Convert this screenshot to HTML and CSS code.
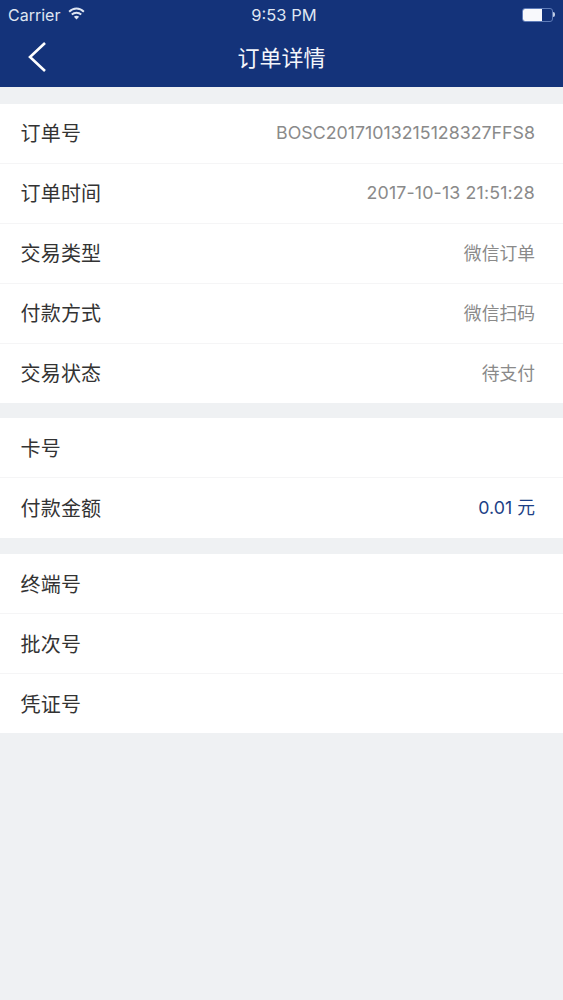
FILE: index.html
```html
<!DOCTYPE html>
<html lang="zh-CN">
<head>
<meta charset="utf-8">
<title>订单详情</title>
<link rel="stylesheet" href="styles.css">
</head>
<body>
<header class="header">
  <div class="status">
    <div class="status-left">
      <span>Carrier</span>
      <svg class="wifi" width="17" height="13" viewBox="0 0 18 13" preserveAspectRatio="none"><path d="M1.2 4.8C5.6.4 12.4.4 16.8 4.8" fill="none" stroke="#dfe6f2" stroke-width="2"/><path d="M4 7.6c2.8-2.6 7.2-2.6 10 0" fill="none" stroke="#dfe6f2" stroke-width="2"/><path d="M9 12.6L6.2 9.7c1.6-1.2 4-1.2 5.6 0z" fill="#dfe6f2"/></svg>
    </div>
    <div class="status-time">9:53 PM</div>
    <div class="status-right">
      <div class="battery"><div class="battery-fill"></div></div>
      <div class="battery-cap"></div>
    </div>
  </div>
  <div class="nav">
    <svg class="back" width="22" height="32" viewBox="0 0 22 32"><path d="M18 2 L3 16 L18 30" fill="none" stroke="#fff" stroke-width="2.6"/></svg>
    <h1 class="title">订单详情</h1>
  </div>
</header>
<main class="content">
  <section class="group">
    <div class="row"><span class="label">订单号</span><span class="value">BOSC20171013215128327FFS8</span></div>
    <div class="row"><span class="label">订单时间</span><span class="value date">2017-10-13 21:51:28</span></div>
    <div class="row"><span class="label">交易类型</span><span class="value">微信订单</span></div>
    <div class="row"><span class="label">付款方式</span><span class="value">微信扫码</span></div>
    <div class="row"><span class="label">交易状态</span><span class="value">待支付</span></div>
  </section>
  <section class="group group-card">
    <div class="row"><span class="label">卡号</span></div>
    <div class="row"><span class="label">付款金额</span><span class="value amount">0.01 元</span></div>
  </section>
  <section class="group">
    <div class="row"><span class="label">终端号</span></div>
    <div class="row"><span class="label">批次号</span></div>
    <div class="row"><span class="label">凭证号</span></div>
  </section>
</main>
</body>
</html>
```
FILE: styles.css
```css
* { box-sizing: border-box; }
html, body { margin: 0; padding: 0; }
body {
  width: 563px;
  height: 1000px;
  overflow: hidden;
  background: #eff1f3;
  font-family: "Inter", "Liberation Sans", "Noto Sans CJK SC", sans-serif;
}
.header {
  height: 87px;
  background: #14337a;
  color: #fff;
}
.status {
  height: 29px;
  padding: 0 8px;
  display: grid;
  grid-template-columns: 1fr auto 1fr;
  align-items: center;
  font-size: 16px;
  color: #dfe6f2;
}
.status-left { display: flex; align-items: center; gap: 8px; }
.wifi { margin-top: -3px; }
.status-time { font-size: 16.5px; margin-left: 5px; }
.status-right { display: flex; justify-content: flex-end; align-items: center; }
.battery {
  width: 31px;
  height: 14px;
  border: 1px solid #5f7cb8;
  border-radius: 3px;
}
.battery-fill { width: 19px; height: 12px; background: #f8f9fc; border-radius: 2px 0 0 2px; }
.battery-cap { width: 2px; height: 5px; background: #c3cfe4; border-radius: 0 2px 2px 0; }
.nav {
  height: 58px;
  position: relative;
  display: flex;
  align-items: center;
  justify-content: center;
}
.back { position: absolute; left: 27px; top: 12px; }
.title {
  margin: -5px 0 0;
  font-family: "Noto Sans CJK SC", sans-serif;
  font-size: 22px;
  font-weight: 400;
  color: #f4f6fb;
}
.content { padding-top: 17px; display: flex; flex-direction: column; }
.group { background: #fff; margin-bottom: 15px; }
.group-card { margin-bottom: 16px; min-height: 120px; }
.row {
  height: 60px;
  padding: 0 28px 0 20.5px;
  display: flex;
  align-items: center;
  justify-content: space-between;
  border-top: 1px solid #f5f5f6;
}
.row:first-child { border-top: 0; height: 59px; }
.label {
  font-family: "Noto Sans CJK SC", sans-serif;
  font-size: 20px;
  letter-spacing: 0.2px;
  color: #333;
  margin-top: -2px;
}
.group:not(:first-child) .label { margin-top: 0; }
.value {
  font-family: "Inter", "Noto Sans CJK SC", sans-serif;
  font-size: 17.8px;
  color: #8a8a8a;
  margin-top: -3px;
}
.date { letter-spacing: 0.15px; }
.amount { color: #1c3f86; }
```
